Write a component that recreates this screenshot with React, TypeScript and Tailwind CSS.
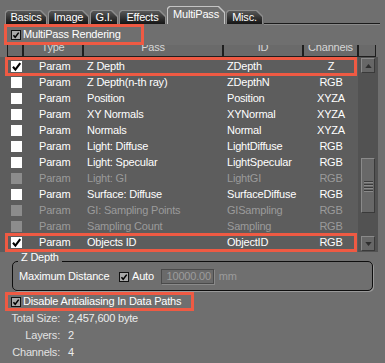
import type { ReactNode } from "react";

const RED = "border-[#ef5a43]";

type Pass = { pass: string; id: string; ch: string; on?: boolean; off?: boolean; hl?: boolean };

const PASSES: Pass[] = [
    { pass: "Z Depth", id: "ZDepth", ch: "Z", on: true, hl: true },
    { pass: "Z Depth(n-th ray)", id: "ZDepthN", ch: "RGB" },
    { pass: "Position", id: "Position", ch: "XYZA" },
    { pass: "XY Normals", id: "XYNormal", ch: "XYZA" },
    { pass: "Normals", id: "Normal", ch: "XYZA" },
    { pass: "Light: Diffuse", id: "LightDiffuse", ch: "RGB" },
    { pass: "Light: Specular", id: "LightSpecular", ch: "RGB" },
    { pass: "Light: GI", id: "LightGI", ch: "RGB", off: true },
    { pass: "Surface: Diffuse", id: "SurfaceDiffuse", ch: "RGB" },
    { pass: "GI: Sampling Points", id: "GISampling", ch: "RGB", off: true },
    { pass: "Sampling Count", id: "Sampling", ch: "RGB", off: true },
    { pass: "Objects ID", id: "ObjectID", ch: "RGB", on: true, hl: true },
];

const TABS = [
    { label: "Basics", w: "w-[42px]" },
    { label: "Image", w: "w-[41px]" },
    { label: "G.I.", w: "w-[28px]" },
    { label: "Effects", w: "w-[47px]" },
    { label: "MultiPass", w: "w-[58px]", active: true },
    { label: "Misc.", w: "w-[37px]" },
];

const HEAD = [
    { label: "", w: "w-[16px]" },
    { label: "Type", w: "w-[60px]" },
    { label: "Pass", w: "w-[140px]" },
    { label: "ID", w: "w-[80px]" },
    { label: "Channels", w: "w-[55px]" },
    { label: "", w: "w-[18px]" },
];

function Check({ on = true }: { on?: boolean }) {
    return on ? (
        <svg viewBox="0 0 10 10" className="h-full w-full">
            <path d="M1.8 5.2 L4 7.8 L8.4 2" fill="none" stroke="#000" strokeWidth="1.9" />
        </svg>
    ) : null;
}

// small grey checkbox used outside the list
function Box() {
    return (
        <span className="block h-[10px] w-[10px] shrink-0 border border-[#111] bg-[#a9a9a9]">
            <Check />
        </span>
    );
}

function Tab({ label, w, active }: { label: string; w: string; active?: boolean }) {
    const clip = "[clip-path:polygon(0_2px,2px_0,calc(100%_-_6px)_0,100%_6px,100%_100%,0_100%)]";
    return (
        <div className={`${w} ${active ? "h-[18px] bg-[#c4c4c4]" : "h-[14px] bg-[#8d8d8d]"} ${clip} shrink-0 p-[1px] pb-0`}>
            <div
                className={`${clip} flex h-full items-center justify-center text-white ${
                    active ? "bg-[#6f6f6f] pb-[2px]" : "bg-gradient-to-b from-[#585858] to-[#161616]"
                }`}
            >
                {label}
            </div>
        </div>
    );
}

function Row({ p }: { p: Pass }) {
    const txt = p.off ? "text-[#9b9b9b]" : "text-white";
    return (
        <div className={`relative flex h-[16px] items-center pl-[11px] ${txt}`}>
            <span className={`block h-[11px] w-[11px] shrink-0 ${p.off ? "bg-[#8c8c8c]" : "bg-white"}`}>
                <Check on={!!p.on} />
            </span>
            <span className="ml-[17px] w-[48px] shrink-0">Param</span>
            <span className="w-[140px] shrink-0 whitespace-nowrap">{p.pass}</span>
            <span className="w-[80px] shrink-0">{p.id}</span>
            <span className="w-[48px] shrink-0 text-center">{p.ch}</span>
            {p.hl && <div className={`absolute -top-[1px] -bottom-[2px] left-[5px] right-[1px] border-[3px] ${RED}`} />}
        </div>
    );
}

function Arrow({ up }: { up?: boolean }) {
    return (
        <div className="flex h-[15px] w-[14px] items-center justify-center border border-t-[#8a8a8a] border-l-[#8a8a8a] border-r-[#3a3a3a] border-b-[#3a3a3a] bg-[#676767]">
            <svg viewBox="0 0 8 5" className="h-[4px] w-[7px]">
                <path d={up ? "M0 5 L4 0 L8 5 Z" : "M0 0 L4 5 L8 0 Z"} fill="#2e2e2e" />
            </svg>
        </div>
    );
}

function Stat({ label, children }: { label: string; children: ReactNode }) {
    return (
        <div className="flex h-[17px] items-center">
            <span className="w-[60px] text-right text-[#e2e2e2]">{label}</span>
            <span className="ml-[8px] text-[#ececec]">{children}</span>
        </div>
    );
}

export default function App() {
    return (
        <div className="h-[363px] w-[385px] overflow-hidden bg-[#6f6f6f] font-['Liberation_Sans',Arial,sans-serif] text-[11px] tracking-[-0.2px] text-white">
            {/* tabs */}
            <div className="flex h-[24px] w-[380px] items-end gap-[1px] pl-[5px]">
                {TABS.map((t) => (
                    <Tab key={t.label} {...t} />
                ))}
                <div className="h-[1px] flex-1 bg-[#1a1a1a] shadow-[0_1px_0_#8a8a8a]" />
            </div>

            {/* multipass toggle */}
            <div className={`ml-[4px] flex h-[21px] w-[140px] items-center border-[3px] pl-[4px] ${RED}`}>
                <Box />
                <span className="ml-[2px] whitespace-nowrap">MultiPass Rendering</span>
            </div>

            {/* header */}
            <div className="ml-[7px] flex h-[12px]">
                {HEAD.map((h, i) => (
                    <div key={i} className={`${h.w} shrink-0 overflow-hidden border border-t-0 border-[#1e1e1e] bg-[#6a6a6a] text-center text-[#d6d6d6]`}>
                        <span className="relative -top-[4px] block leading-[12px]">{h.label}</span>
                    </div>
                ))}
            </div>

            {/* pass list */}
            <div className="relative z-10 flex h-[195px] w-[378px] bg-[#5d5d5d]">
                <div className="w-[358px] pt-[1px]">
                    {PASSES.map((p) => (
                        <Row key={p.id} p={p} />
                    ))}
                </div>
                <div className="flex w-[20px] flex-col bg-[#525252] px-[3px] py-[1px]">
                    <Arrow up />
                    <div className="relative flex-1">
                        <div className="absolute left-0 right-0 top-[85px] flex h-[55px] flex-col items-center justify-center gap-[2px] border border-t-[#8a8a8a] border-l-[#8a8a8a] border-r-[#3a3a3a] border-b-[#3a3a3a] bg-[#686868]">
                            {[0, 1, 2, 3].map((i) => (
                                <div key={i} className="h-[1px] w-[9px] bg-[#3c3c3c] shadow-[0_1px_0_#8a8a8a]" />
                            ))}
                        </div>
                    </div>
                    <Arrow />
                </div>
            </div>

            {/* Z Depth group */}
            <div className="relative ml-[12px] mt-[9px] flex h-[30px] w-[361px] items-center rounded-[5px] border border-[#0e0e0e] pl-[6px] pt-[1px] shadow-[1px_1px_0_#9a9a9a]">
                <span className="absolute -top-[11px] left-[5px] bg-[#6f6f6f] px-[3px] leading-[13px]">Z Depth</span>
                <span className="w-[100px] shrink-0 whitespace-nowrap">Maximum Distance</span>
                <Box />
                <span className="ml-[3px]">Auto</span>
                <div className="ml-[7px] flex h-[15px] w-[53px] items-center justify-end border border-[#4a4a4a] bg-[#6a6a6a] pr-[2px] text-[#9c9c9c] shadow-[1px_1px_0_#8a8a8a]">
                    10000.00
                </div>
                <span className="ml-[5px] text-[#9c9c9c]">mm</span>
            </div>

            {/* antialiasing */}
            <div className={`ml-[5px] mt-[1px] flex h-[19px] w-[189px] items-center border-[3px] pl-[3px] ${RED}`}>
                <Box />
                <span className="ml-[2px] whitespace-nowrap">Disable Antialiasing In Data Paths</span>
            </div>

            {/* totals */}
            <div className="-mt-[1px]">
                <Stat label="Total Size:">2,457,600 byte</Stat>
                <Stat label="Layers:">2</Stat>
                <Stat label="Channels:">4</Stat>
            </div>
        </div>
    );
}
